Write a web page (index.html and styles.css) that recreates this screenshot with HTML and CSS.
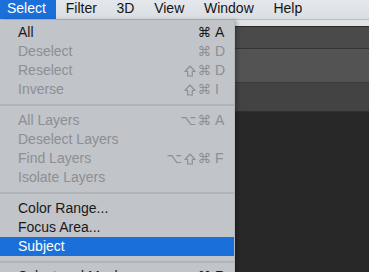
FILE: index.html
```html
<!DOCTYPE html>
<html>
<head>
<meta charset="utf-8">
<link rel="stylesheet" href="styles.css">
</head>
<body>
<div class="screen">
  <nav class="menubar">
    <span class="mb-item active">Select</span>
    <span class="mb-item">Filter</span>
    <span class="mb-item">3D</span>
    <span class="mb-item">View</span>
    <span class="mb-item">Window</span>
    <span class="mb-item">Help</span>
  </nav>
  <div class="app">
    <div class="strip"></div>
    <div class="bar bar1"></div>
    <div class="bar bar2"></div>
    <div class="bar bar3"></div>
    <div class="canvas"></div>
  </div>
  <div class="dropdown">
    <div class="item"><span class="label">All</span><span class="mods">⌘</span><span class="key">A</span></div>
    <div class="item off"><span class="label">Deselect</span><span class="mods">⌘</span><span class="key">D</span></div>
    <div class="item off"><span class="label">Reselect</span><span class="mods"><svg class="shift" viewBox="0 0 12 12"><path d="M6 1 L11 6.5 H8.3 V11 H3.7 V6.5 H1 Z"/></svg>⌘</span><span class="key">D</span></div>
    <div class="item off"><span class="label">Inverse</span><span class="mods"><svg class="shift" viewBox="0 0 12 12"><path d="M6 1 L11 6.5 H8.3 V11 H3.7 V6.5 H1 Z"/></svg>⌘</span><span class="key">I</span></div>
    <div class="sep"></div>
    <div class="item off"><span class="label">All Layers</span><span class="mods">⌥⌘</span><span class="key">A</span></div>
    <div class="item off"><span class="label">Deselect Layers</span><span class="mods"></span><span class="key"></span></div>
    <div class="item off"><span class="label">Find Layers</span><span class="mods">⌥<svg class="shift" viewBox="0 0 12 12"><path d="M6 1 L11 6.5 H8.3 V11 H3.7 V6.5 H1 Z"/></svg>⌘</span><span class="key">F</span></div>
    <div class="item off"><span class="label">Isolate Layers</span><span class="mods"></span><span class="key"></span></div>
    <div class="sep"></div>
    <div class="item"><span class="label">Color Range...</span><span class="mods"></span><span class="key"></span></div>
    <div class="item"><span class="label">Focus Area...</span><span class="mods"></span><span class="key"></span></div>
    <div class="item selected"><span class="label">Subject</span><span class="mods"></span><span class="key"></span></div>
    <div class="sep last"></div>
    <div class="item"><span class="label">Select and Mask...</span><span class="mods">⌥⌘</span><span class="key">R</span></div>
  </div>
</div>
</body>
</html>
```
FILE: styles.css
```css
html, body {
  margin: 0;
  padding: 0;
  width: 369px;
  height: 272px;
  overflow: hidden;
  background: #282828;
}
.screen {
  position: relative;
  width: 369px;
  height: 272px;
  overflow: hidden;
  font-family: "Liberation Sans", Arial, sans-serif;
  font-size: 14px;
}
.menubar {
  display: flex;
  height: 19px;
  background: linear-gradient(#e4e7eb, #dadee3);
  border-bottom: 1px solid #b9bdc3;
  color: #141414;
}
.mb-item {
  padding: 0 9.85px;
  line-height: 17px;
  height: 19px;
}
.mb-item.active {
  padding-left: 7px;
  padding-right: 10px;
  background: #1b6fd8;
  color: #ffffff;
}
.app {
  display: flex;
  flex-direction: column;
  height: 252px;
}
.strip {
  height: 6px;
  background: #e1e3e6;
  border-bottom: 1px solid #2b2b2b;
}
.bar1 {
  height: 21px;
  background: #4a4a4a;
  border-bottom: 1px solid #343434;
}
.bar2 {
  height: 33px;
  background: #535353;
  border-bottom: 1px solid #3a3a3a;
}
.bar3 {
  height: 28px;
  background: #434343;
  border-bottom: 1px solid #2f2f2f;
}
.canvas {
  flex: 1;
  background: #282828;
}
.dropdown {
  position: absolute;
  top: 20px;
  left: 0;
  width: 234px;
  padding-top: 3px;
  background: #c1c4c9;
  box-shadow: 1px 0 0 #b4b7bc, 3px 0 4px rgba(0,0,0,0.25);
}
.item {
  display: flex;
  height: 19px;
  line-height: 19px;
  padding-left: 18px;
  padding-right: 11px;
  color: #191919;
}
.item.off {
  color: #8c8f94;
}
.item.selected {
  background: #1b6fd8;
  color: #ffffff;
}
.label {
  flex: 1;
  white-space: nowrap;
}
.mods {
  display: flex;
  align-items: center;
  font-family: "DejaVu Sans", sans-serif;
  font-size: 13.5px;
  letter-spacing: 1.5px;
  text-align: right;
}
.shift {
  width: 12px;
  height: 12px;
  margin-right: 2px;
  fill: none;
  stroke: currentColor;
  stroke-width: 1.2;
  stroke-linejoin: round;
}
.key {
  width: 8px;
  margin-left: 2.5px;
}
.sep {
  height: 12px;
  display: flex;
  align-items: center;
}
.sep::after {
  content: "";
  flex: 1;
  height: 2px;
  background: #b0b3b8;
}
.sep.last {
  height: 11px;
}
```
